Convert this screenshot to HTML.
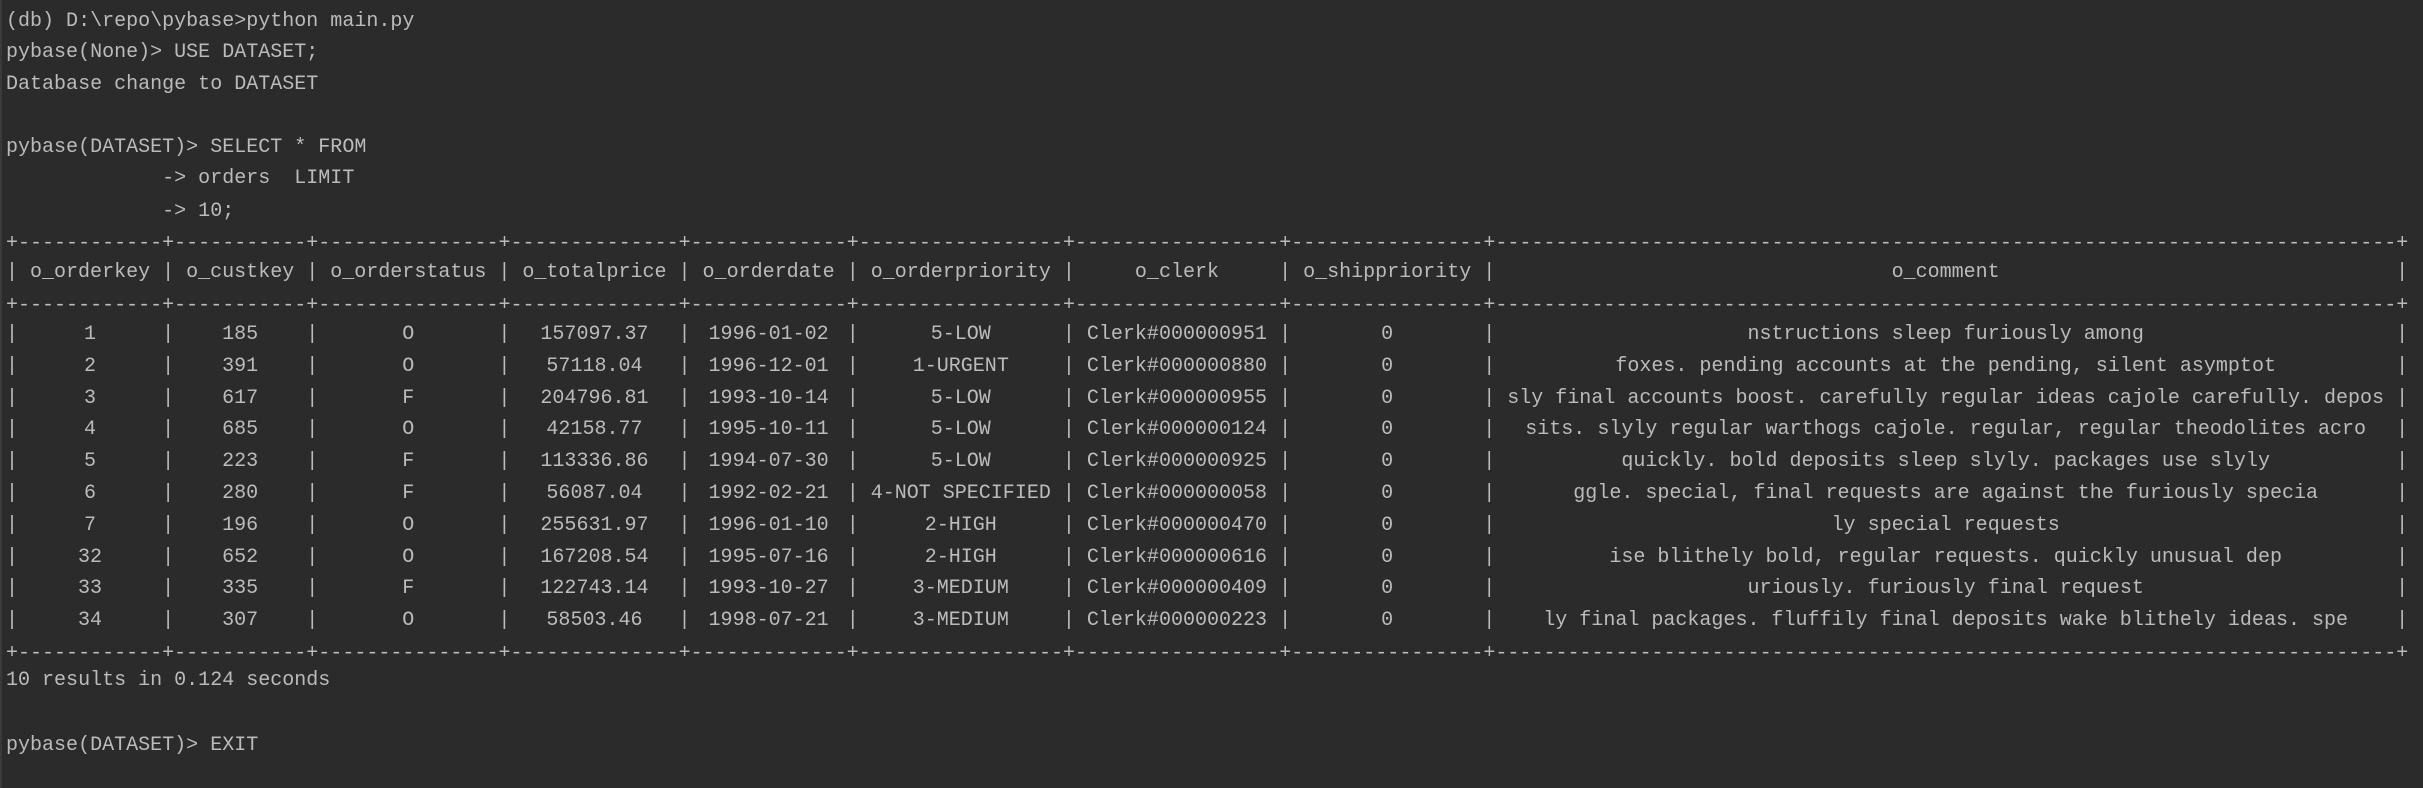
<!DOCTYPE html>
<html><head><meta charset="utf-8"><style>
html,body{margin:0;padding:0;background:#2b2b2b;}
body{width:2423px;height:788px;position:relative;overflow:hidden;font-family:"Liberation Mono","DejaVu Sans Mono",monospace;font-size:20.03px;color:#bbbbbb;}
.edge{position:absolute;left:0;top:0;width:2px;height:788px;background:#3a3a3a;}
.l{position:absolute;left:6px;height:32px;line-height:32px;white-space:pre;}
.r{display:flex;}
.r b{font-weight:normal;width:1ch;text-align:center;display:inline-block;}
.r i{font-style:normal;display:inline-block;text-align:center;white-space:pre;}
.c1{width:12ch}.c2{width:11ch}.c3{width:15ch}.c4{width:14ch}.c5{width:13ch}.c6{width:17ch}.c7{width:17ch}.c8{width:16ch}.c9{width:75ch}
</style></head><body>
<div class="edge"></div>
<div class="l" style="top:6px">(db) D:\repo\pybase&gt;python main.py</div>
<div class="l" style="top:37px">pybase(None)&gt; USE DATASET;</div>
<div class="l" style="top:69px">Database change to DATASET</div>
<div class="l" style="top:132px">pybase(DATASET)&gt; SELECT * FROM</div>
<div class="l" style="top:163px">             -&gt; orders  LIMIT</div>
<div class="l" style="top:196px">             -&gt; 10;</div>
<div class="l" style="top:228px">+------------+-----------+---------------+--------------+-------------+-----------------+-----------------+----------------+---------------------------------------------------------------------------+</div>
<div class="l r" style="top:257px"><b>|</b><i class="c1">o_orderkey</i><b>|</b><i class="c2">o_custkey</i><b>|</b><i class="c3">o_orderstatus</i><b>|</b><i class="c4">o_totalprice</i><b>|</b><i class="c5">o_orderdate</i><b>|</b><i class="c6">o_orderpriority</i><b>|</b><i class="c7">o_clerk</i><b>|</b><i class="c8">o_shippriority</i><b>|</b><i class="c9">o_comment</i><b>|</b></div>
<div class="l" style="top:290px">+------------+-----------+---------------+--------------+-------------+-----------------+-----------------+----------------+---------------------------------------------------------------------------+</div>
<div class="l r" style="top:319px"><b>|</b><i class="c1">1</i><b>|</b><i class="c2">185</i><b>|</b><i class="c3">O</i><b>|</b><i class="c4">157097.37</i><b>|</b><i class="c5">1996-01-02</i><b>|</b><i class="c6">5-LOW</i><b>|</b><i class="c7">Clerk#000000951</i><b>|</b><i class="c8">0</i><b>|</b><i class="c9">nstructions sleep furiously among</i><b>|</b></div>
<div class="l r" style="top:351px"><b>|</b><i class="c1">2</i><b>|</b><i class="c2">391</i><b>|</b><i class="c3">O</i><b>|</b><i class="c4">57118.04</i><b>|</b><i class="c5">1996-12-01</i><b>|</b><i class="c6">1-URGENT</i><b>|</b><i class="c7">Clerk#000000880</i><b>|</b><i class="c8">0</i><b>|</b><i class="c9">foxes. pending accounts at the pending, silent asymptot</i><b>|</b></div>
<div class="l r" style="top:383px"><b>|</b><i class="c1">3</i><b>|</b><i class="c2">617</i><b>|</b><i class="c3">F</i><b>|</b><i class="c4">204796.81</i><b>|</b><i class="c5">1993-10-14</i><b>|</b><i class="c6">5-LOW</i><b>|</b><i class="c7">Clerk#000000955</i><b>|</b><i class="c8">0</i><b>|</b><i class="c9">sly final accounts boost. carefully regular ideas cajole carefully. depos</i><b>|</b></div>
<div class="l r" style="top:414px"><b>|</b><i class="c1">4</i><b>|</b><i class="c2">685</i><b>|</b><i class="c3">O</i><b>|</b><i class="c4">42158.77</i><b>|</b><i class="c5">1995-10-11</i><b>|</b><i class="c6">5-LOW</i><b>|</b><i class="c7">Clerk#000000124</i><b>|</b><i class="c8">0</i><b>|</b><i class="c9">sits. slyly regular warthogs cajole. regular, regular theodolites acro</i><b>|</b></div>
<div class="l r" style="top:446px"><b>|</b><i class="c1">5</i><b>|</b><i class="c2">223</i><b>|</b><i class="c3">F</i><b>|</b><i class="c4">113336.86</i><b>|</b><i class="c5">1994-07-30</i><b>|</b><i class="c6">5-LOW</i><b>|</b><i class="c7">Clerk#000000925</i><b>|</b><i class="c8">0</i><b>|</b><i class="c9">quickly. bold deposits sleep slyly. packages use slyly</i><b>|</b></div>
<div class="l r" style="top:478px"><b>|</b><i class="c1">6</i><b>|</b><i class="c2">280</i><b>|</b><i class="c3">F</i><b>|</b><i class="c4">56087.04</i><b>|</b><i class="c5">1992-02-21</i><b>|</b><i class="c6">4-NOT SPECIFIED</i><b>|</b><i class="c7">Clerk#000000058</i><b>|</b><i class="c8">0</i><b>|</b><i class="c9">ggle. special, final requests are against the furiously specia</i><b>|</b></div>
<div class="l r" style="top:510px"><b>|</b><i class="c1">7</i><b>|</b><i class="c2">196</i><b>|</b><i class="c3">O</i><b>|</b><i class="c4">255631.97</i><b>|</b><i class="c5">1996-01-10</i><b>|</b><i class="c6">2-HIGH</i><b>|</b><i class="c7">Clerk#000000470</i><b>|</b><i class="c8">0</i><b>|</b><i class="c9">ly special requests</i><b>|</b></div>
<div class="l r" style="top:542px"><b>|</b><i class="c1">32</i><b>|</b><i class="c2">652</i><b>|</b><i class="c3">O</i><b>|</b><i class="c4">167208.54</i><b>|</b><i class="c5">1995-07-16</i><b>|</b><i class="c6">2-HIGH</i><b>|</b><i class="c7">Clerk#000000616</i><b>|</b><i class="c8">0</i><b>|</b><i class="c9">ise blithely bold, regular requests. quickly unusual dep</i><b>|</b></div>
<div class="l r" style="top:573px"><b>|</b><i class="c1">33</i><b>|</b><i class="c2">335</i><b>|</b><i class="c3">F</i><b>|</b><i class="c4">122743.14</i><b>|</b><i class="c5">1993-10-27</i><b>|</b><i class="c6">3-MEDIUM</i><b>|</b><i class="c7">Clerk#000000409</i><b>|</b><i class="c8">0</i><b>|</b><i class="c9">uriously. furiously final request</i><b>|</b></div>
<div class="l r" style="top:605px"><b>|</b><i class="c1">34</i><b>|</b><i class="c2">307</i><b>|</b><i class="c3">O</i><b>|</b><i class="c4">58503.46</i><b>|</b><i class="c5">1998-07-21</i><b>|</b><i class="c6">3-MEDIUM</i><b>|</b><i class="c7">Clerk#000000223</i><b>|</b><i class="c8">0</i><b>|</b><i class="c9">ly final packages. fluffily final deposits wake blithely ideas. spe</i><b>|</b></div>
<div class="l" style="top:638px">+------------+-----------+---------------+--------------+-------------+-----------------+-----------------+----------------+---------------------------------------------------------------------------+</div>
<div class="l" style="top:665px">10 results in 0.124 seconds</div>
<div class="l" style="top:730px">pybase(DATASET)&gt; EXIT</div>
</body></html>
